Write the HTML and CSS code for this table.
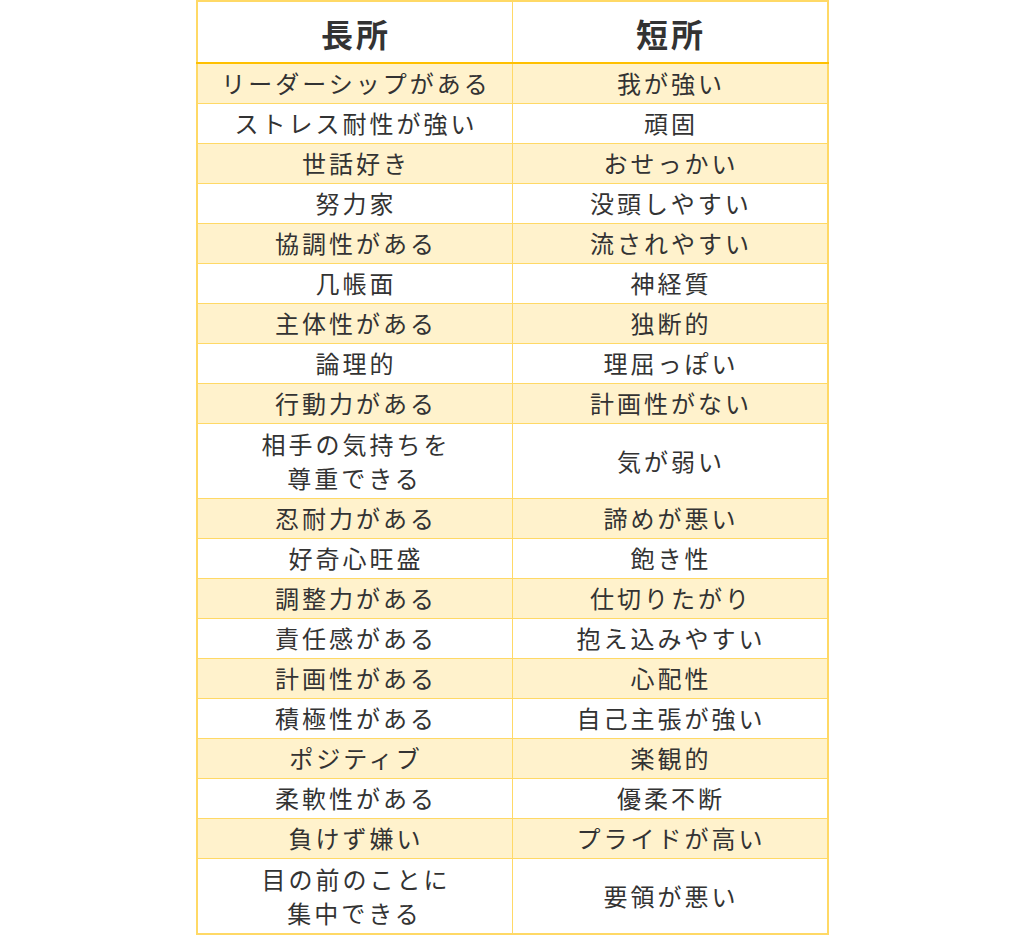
FILE: index.html
```html
<!DOCTYPE html>
<html lang="ja">
<head>
<meta charset="utf-8">
<title>長所と短所</title>
<link rel="stylesheet" href="styles.css">
</head>
<body>
<table class="traits">
  <thead>
    <tr><th>長所</th><th>短所</th></tr>
  </thead>
  <tbody>
    <tr><td>リーダーシップがある</td><td>我が強い</td></tr>
    <tr><td>ストレス耐性が強い</td><td>頑固</td></tr>
    <tr><td>世話好き</td><td>おせっかい</td></tr>
    <tr><td>努力家</td><td>没頭しやすい</td></tr>
    <tr><td>協調性がある</td><td>流されやすい</td></tr>
    <tr><td>几帳面</td><td>神経質</td></tr>
    <tr><td>主体性がある</td><td>独断的</td></tr>
    <tr><td>論理的</td><td>理屈っぽい</td></tr>
    <tr><td>行動力がある</td><td>計画性がない</td></tr>
    <tr><td class="two">相手の気持ちを<br>尊重できる</td><td>気が弱い</td></tr>
    <tr><td>忍耐力がある</td><td>諦めが悪い</td></tr>
    <tr><td>好奇心旺盛</td><td>飽き性</td></tr>
    <tr><td>調整力がある</td><td>仕切りたがり</td></tr>
    <tr><td>責任感がある</td><td>抱え込みやすい</td></tr>
    <tr><td>計画性がある</td><td>心配性</td></tr>
    <tr><td>積極性がある</td><td>自己主張が強い</td></tr>
    <tr><td>ポジティブ</td><td>楽観的</td></tr>
    <tr><td>柔軟性がある</td><td>優柔不断</td></tr>
    <tr><td>負けず嫌い</td><td>プライドが高い</td></tr>
    <tr><td class="two">目の前のことに<br>集中できる</td><td>要領が悪い</td></tr>
  </tbody>
</table>
</body>
</html>
```
FILE: styles.css
```css
html, body {
  margin: 0;
  padding: 0;
  background: #ffffff;
}
.traits {
  width: 633px;
  margin: 0 auto;
  border-collapse: collapse;
  table-layout: fixed;
  font-family: "Noto Sans CJK JP", "Noto Sans", sans-serif;
  color: #333333;
  border: 2px solid #ffd966;
}
.traits th,
.traits td {
  width: 50%;
  text-align: center;
  border: 1px solid #ffd966;
  padding: 0;
}
.traits th {
  font-size: 32px;
  font-weight: 700;
  letter-spacing: 3px;
  text-indent: 3px;
  line-height: 34px;
  padding: 14px 0 12px;
  border-top: 2px solid #ffd966;
  border-bottom: 2px solid #ffc000;
}
.traits td {
  font-size: 24px;
  font-weight: 400;
  letter-spacing: 3px;
  text-indent: 3px;
  line-height: 34px;
  padding: 2px 0 3px;
}
.traits td.two {
  padding: 3px 0 3px;
}
.traits tbody tr:nth-child(odd) td {
  background: #fff2cc;
}
```
